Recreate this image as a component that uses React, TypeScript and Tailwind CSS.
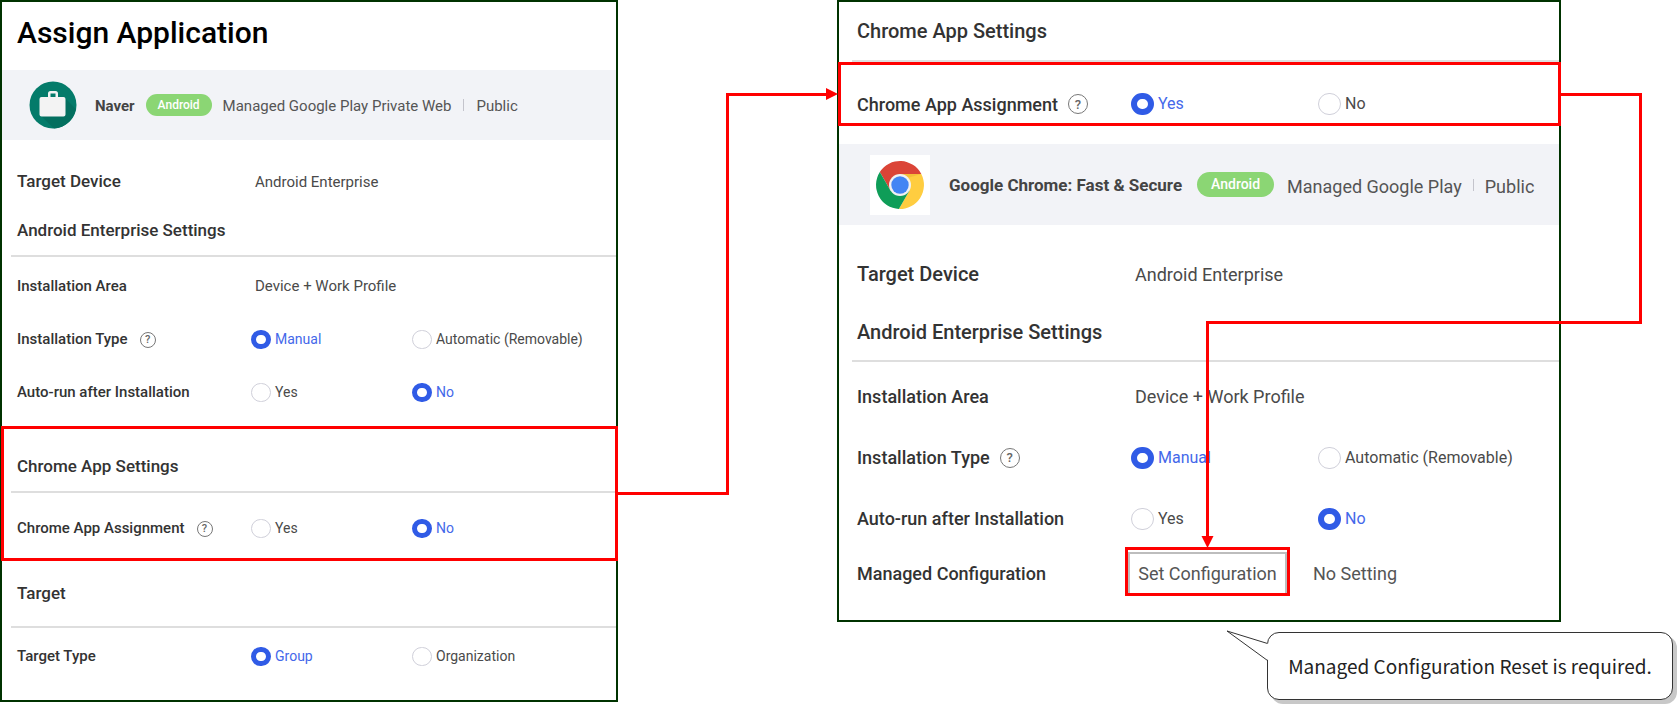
import type { ReactNode } from "react";

type Size = "sm" | "lg";

const styles = {
  sm: {
    heading: "text-[17px]",
    label: "text-[15px]",
    value: "text-[15px]",
    option: "text-[14px]",
    labelCell: "w-[234px] pl-[15px]",
    optionCell: "w-[161px]",
    radio: "h-[19px] w-5 checked:border-[5px]",
    rule: "ml-[9px]",
    help: "size-4 text-[11px] ml-3",
    row: "h-[53px]",
  },
  lg: {
    heading: "text-[20px]",
    label: "text-[18px]",
    value: "text-[18px]",
    option: "text-[16px]",
    labelCell: "w-[277px] pl-[18px]",
    optionCell: "w-[187px]",
    radio: "h-[22px] w-[23px] checked:border-[6px]",
    rule: "ml-[13px]",
    help: "size-5 text-[13px] ml-2.5",
    row: "h-[61px]",
  },
};

function Help({ size, topic }: { size: Size; topic: string }) {
  return (
    <button
      type="button"
      aria-label={`Help: ${topic}`}
      className={`flex shrink-0 items-center justify-center rounded-full border border-[#777] font-medium leading-none text-[#666] ${styles[size].help}`}
    >
      ?
    </button>
  );
}

function Heading({ size, children, className }: { size: Size; children: ReactNode; className: string }) {
  const s = styles[size];
  return (
    <div>
      <h2 className={`flex items-center font-medium whitespace-nowrap text-[#333] ${s.labelCell} ${s.heading} ${className}`}>
        {children}
      </h2>
      <hr className={`border-t-2 border-[#dedede] ${s.rule}`} />
    </div>
  );
}

function ValueRow({
  size,
  label,
  value,
  strong,
  className,
}: {
  size: Size;
  label: string;
  value: string;
  strong?: boolean;
  className?: string;
}) {
  const s = styles[size];
  return (
    <div className={`flex items-center ${className ?? s.row}`}>
      <div className={`shrink-0 font-medium text-[#333] ${s.labelCell} ${strong ? s.heading : s.label}`}>{label}</div>
      <div className={`ml-[15px] pl-1 text-[#4a4a4a] ${s.value}`}>{value}</div>
    </div>
  );
}

function RadioRow({
  size,
  label,
  name,
  options,
  selected,
  help,
  className,
}: {
  size: Size;
  label: string;
  name: string;
  options: string[];
  selected: string;
  help?: boolean;
  className?: string;
}) {
  const s = styles[size];
  return (
    <div role="radiogroup" aria-label={label} className={`flex items-center ${className ?? s.row}`}>
      <div className={`flex shrink-0 items-center font-medium whitespace-nowrap text-[#333] ${s.labelCell} ${s.label}`}>
        {label}
        {help && <Help size={size} topic={label} />}
      </div>
      <div className="ml-[15px] flex">
        {options.map((option) => (
          <label key={option} className={`flex items-center gap-1 whitespace-nowrap ${s.optionCell} ${s.option}`}>
            <input
              type="radio"
              name={name}
              defaultChecked={option === selected}
              className={`peer shrink-0 appearance-none rounded-full border border-[#d0d0da] bg-white checked:border-[#305be6] ${s.radio}`}
            />
            <span className="text-[#4a4a4a] peer-checked:text-[#4468ea]">{option}</span>
          </label>
        ))}
      </div>
    </div>
  );
}

function Highlight({ children, className }: { children: ReactNode; className: string }) {
  return (
    <section className={`relative ${className}`}>
      {children}
      <div className="pointer-events-none absolute inset-y-0 -right-[2px] -left-px border-3 border-[#ff0000]" />
    </section>
  );
}

function BriefcaseIcon() {
  return (
    <svg viewBox="0 0 48 48" className="size-12 shrink-0" aria-hidden="true">
      <circle cx="24" cy="24" r="23.5" fill="#047b6a" />
      <path d="M36.500 17.500L46.800 28A23.500 23.500 0 0 1 25 47.500L12 35z" fill="#036f5f" />
      <path
        fillRule="evenodd"
        d="M19 16v-3.500a2.500 2.500 0 0 1 2.500-2.500h5a2.500 2.500 0 0 1 2.500 2.500V16h5.500a2 2 0 0 1 2 2v15.500a2 2 0 0 1-2 2h-22a2 2 0 0 1-2-2V18a2 2 0 0 1 2-2zM21.500 16h5v-3.500h-5z"
        fill="#f3f3f3"
      />
    </svg>
  );
}

function ChromeIcon() {
  return (
    <svg viewBox="-24 -24 48 48" className="size-12" aria-hidden="true">
      <path d="M-20.180-12.950A24 24 0 0 1 21.300-11L0-11L-9.530 5.500z" fill="#db4437" />
      <path d="M21.300-11A24 24 0 0 1-1.120 23.950L9.530 5.500L0-11z" fill="#ffcd40" />
      <path d="M-1.120 23.950A24 24 0 0 1-20.180-12.950L-9.530 5.500L9.530 5.500z" fill="#0f9d58" />
      <path d="M0-11H21.300L9-7.500z" fill="#e0a92d" opacity="0.4" />
      <circle r="11" fill="#f1f1f1" />
      <circle r="8.700" fill="#4285f4" />
    </svg>
  );
}

function AssignPanel() {
  return (
    <main className="self-start border-2 border-[#003300] bg-white pb-[17px]">
      <h1 className="flex h-[68px] items-center pb-2 pl-[15px] text-[30px] font-medium text-black">Assign Application</h1>
      <div className="flex h-[70px] items-center bg-[#f2f3f7] pl-[27px] whitespace-nowrap">
        <BriefcaseIcon />
        <strong className="ml-[18px] pt-[3px] text-[15px] font-bold text-[#444]">Naver</strong>
        <span className="ml-[11px] flex h-[22px] w-[66px] items-center justify-center rounded-full bg-[#8bd674] text-[12px] font-medium text-white">
          Android
        </span>
        <span className="ml-[11px] pt-[3px] text-[15px] text-[#555]">Managed Google Play Private Web</span>
        <span className="mx-3 h-3 w-px bg-[#c4c4cc]" />
        <span className="pt-[3px] text-[15px] text-[#555]">Public</span>
      </div>
      <ValueRow size="sm" strong label="Target Device" value="Android Enterprise" className="mt-[17px] h-[50px]" />
      <Heading size="sm" className="h-[48px]">
        Android Enterprise Settings
      </Heading>
      <div className="pt-[3px] pb-[7px]">
        <ValueRow size="sm" label="Installation Area" value="Device + Work Profile" />
        <RadioRow size="sm" label="Installation Type" name="type" help options={["Manual", "Automatic (Removable)"]} selected="Manual" />
        <RadioRow size="sm" label="Auto-run after Installation" name="autorun" options={["Yes", "No"]} selected="No" />
      </div>
      <Highlight className="pt-[17px] pb-[6px]">
        <Heading size="sm" className="h-12">
          Chrome App Settings
        </Heading>
        <RadioRow size="sm" label="Chrome App Assignment" name="assignment" help options={["Yes", "No"]} selected="No" className="mt-[9px] h-[53px]" />
      </Highlight>
      <Heading size="sm" className="h-[65px]">
        Target
      </Heading>
      <RadioRow size="sm" label="Target Type" name="target" options={["Group", "Organization"]} selected="Group" className="mt-[2px] h-[53px]" />
    </main>
  );
}

function AssignmentConnector() {
  return (
    <div className="relative" aria-hidden="true">
      <div className="absolute top-[93px] left-0 h-[402px] w-[calc(50%+1px)] border-r-3 border-b-3 border-[#ff0000]" />
      <div className="absolute top-[93px] right-2 left-1/2 h-[3px] bg-[#ff0000]" />
      <svg viewBox="0 0 12 12" className="absolute top-[88px] -right-px z-10 size-3">
        <path d="M0 0L12 6L0 12z" fill="#ff0000" />
      </svg>
    </div>
  );
}

function ConfigurationConnector() {
  return (
    <div className="pointer-events-none" aria-hidden="true">
      <div className="absolute top-[91px] left-full ml-[2px] h-[231px] w-[81px] border-3 border-l-0 border-[#ff0000]" />
      <div className="absolute top-[319px] -right-[2px] left-[367px] h-[219px] border-t-3 border-l-3 border-[#ff0000]" />
      <svg viewBox="0 0 12 12" className="absolute top-[534px] left-[362px] h-3 w-[13px]">
        <path d="M0 0H12L6 12z" fill="#ff0000" />
      </svg>
    </div>
  );
}

function ChromePanel() {
  return (
    <section className="relative mr-[117px] border-2 border-[#003300] bg-white pb-6">
      <Heading size="lg" className="h-[58px]">
        Chrome App Settings
      </Heading>
      <Highlight className="pt-[22px] pb-[2px]">
        <RadioRow size="lg" label="Chrome App Assignment" name="chrome-assignment" help options={["Yes", "No"]} selected="Yes" className="h-10" />
      </Highlight>
      <div className="mt-[18px] flex h-[81px] items-center bg-[#f2f3f7] pl-[31px] whitespace-nowrap">
        <span className="flex size-[60px] shrink-0 items-center justify-center bg-white">
          <ChromeIcon />
        </span>
        <strong className="ml-[19px] pt-[3px] text-[17px] font-bold text-[#444]">Google Chrome: Fast &amp; Secure</strong>
        <span className="ml-[15px] flex h-[25px] w-[77px] items-center justify-center rounded-full bg-[#8bd674] text-[14px] font-medium text-white">
          Android
        </span>
        <span className="ml-[13px] pt-[3px] text-[18px] text-[#555]">Managed Google Play</span>
        <span className="mx-[11px] h-3 w-px bg-[#c4c4cc]" />
        <span className="pt-[3px] text-[18px] text-[#555]">Public</span>
      </div>
      <ValueRow size="lg" strong label="Target Device" value="Android Enterprise" className="mt-[19px] h-[60px]" />
      <Heading size="lg" className="h-[56px]">
        Android Enterprise Settings
      </Heading>
      <div className="pt-1">
        <ValueRow size="lg" label="Installation Area" value="Device + Work Profile" />
        <RadioRow size="lg" label="Installation Type" name="chrome-type" help options={["Manual", "Automatic (Removable)"]} selected="Manual" />
        <RadioRow size="lg" label="Auto-run after Installation" name="chrome-autorun" options={["Yes", "No"]} selected="No" className="h-[59px] pt-[2px]" />
      </div>
      <div className="flex items-center">
        <div className="w-[286px] shrink-0 pt-1 pl-[18px] text-[18px] font-medium text-[#333]">Managed Configuration</div>
        <div className="border-3 border-[#ff0000]">
          <button
            type="button"
            className="mt-[2px] flex h-[41px] w-[159px] items-center justify-center border-2 border-b-0 border-[#bdbdbd] bg-white text-[18px] text-[#555]"
          >
            Set Configuration
          </button>
        </div>
        <div className="ml-[23px] pt-1 text-[18px] text-[#555]">No Setting</div>
      </div>
      <ConfigurationConnector />
    </section>
  );
}

function Callout() {
  return (
    <aside className="relative mt-[10px] mr-[5px] flex h-[68px] w-[406px] items-center justify-center self-end rounded-xl border border-[#333] bg-white font-['Noto_Sans_CJK_KR',sans-serif] text-[19px] whitespace-nowrap text-[#222] shadow-[4px_4px_0_0_#c8c8c8]">
      <svg viewBox="0 0 43 32" className="absolute -top-[3px] -left-[42px] h-8 w-[43px]" aria-hidden="true">
        <path d="M42.500 13.500L1 1L42.500 30.500" fill="#fff" />
        <path d="M41.500 13.500L1 1L41.500 30.500" fill="none" stroke="#333" />
      </svg>
      Managed Configuration Reset is required.
    </aside>
  );
}

export default function App() {
  return (
    <div className="grid min-h-screen grid-cols-[618fr_219fr_841fr] bg-white font-[Roboto,sans-serif]">
      <AssignPanel />
      <AssignmentConnector />
      <div className="flex flex-col">
        <ChromePanel />
        <Callout />
      </div>
    </div>
  );
}
